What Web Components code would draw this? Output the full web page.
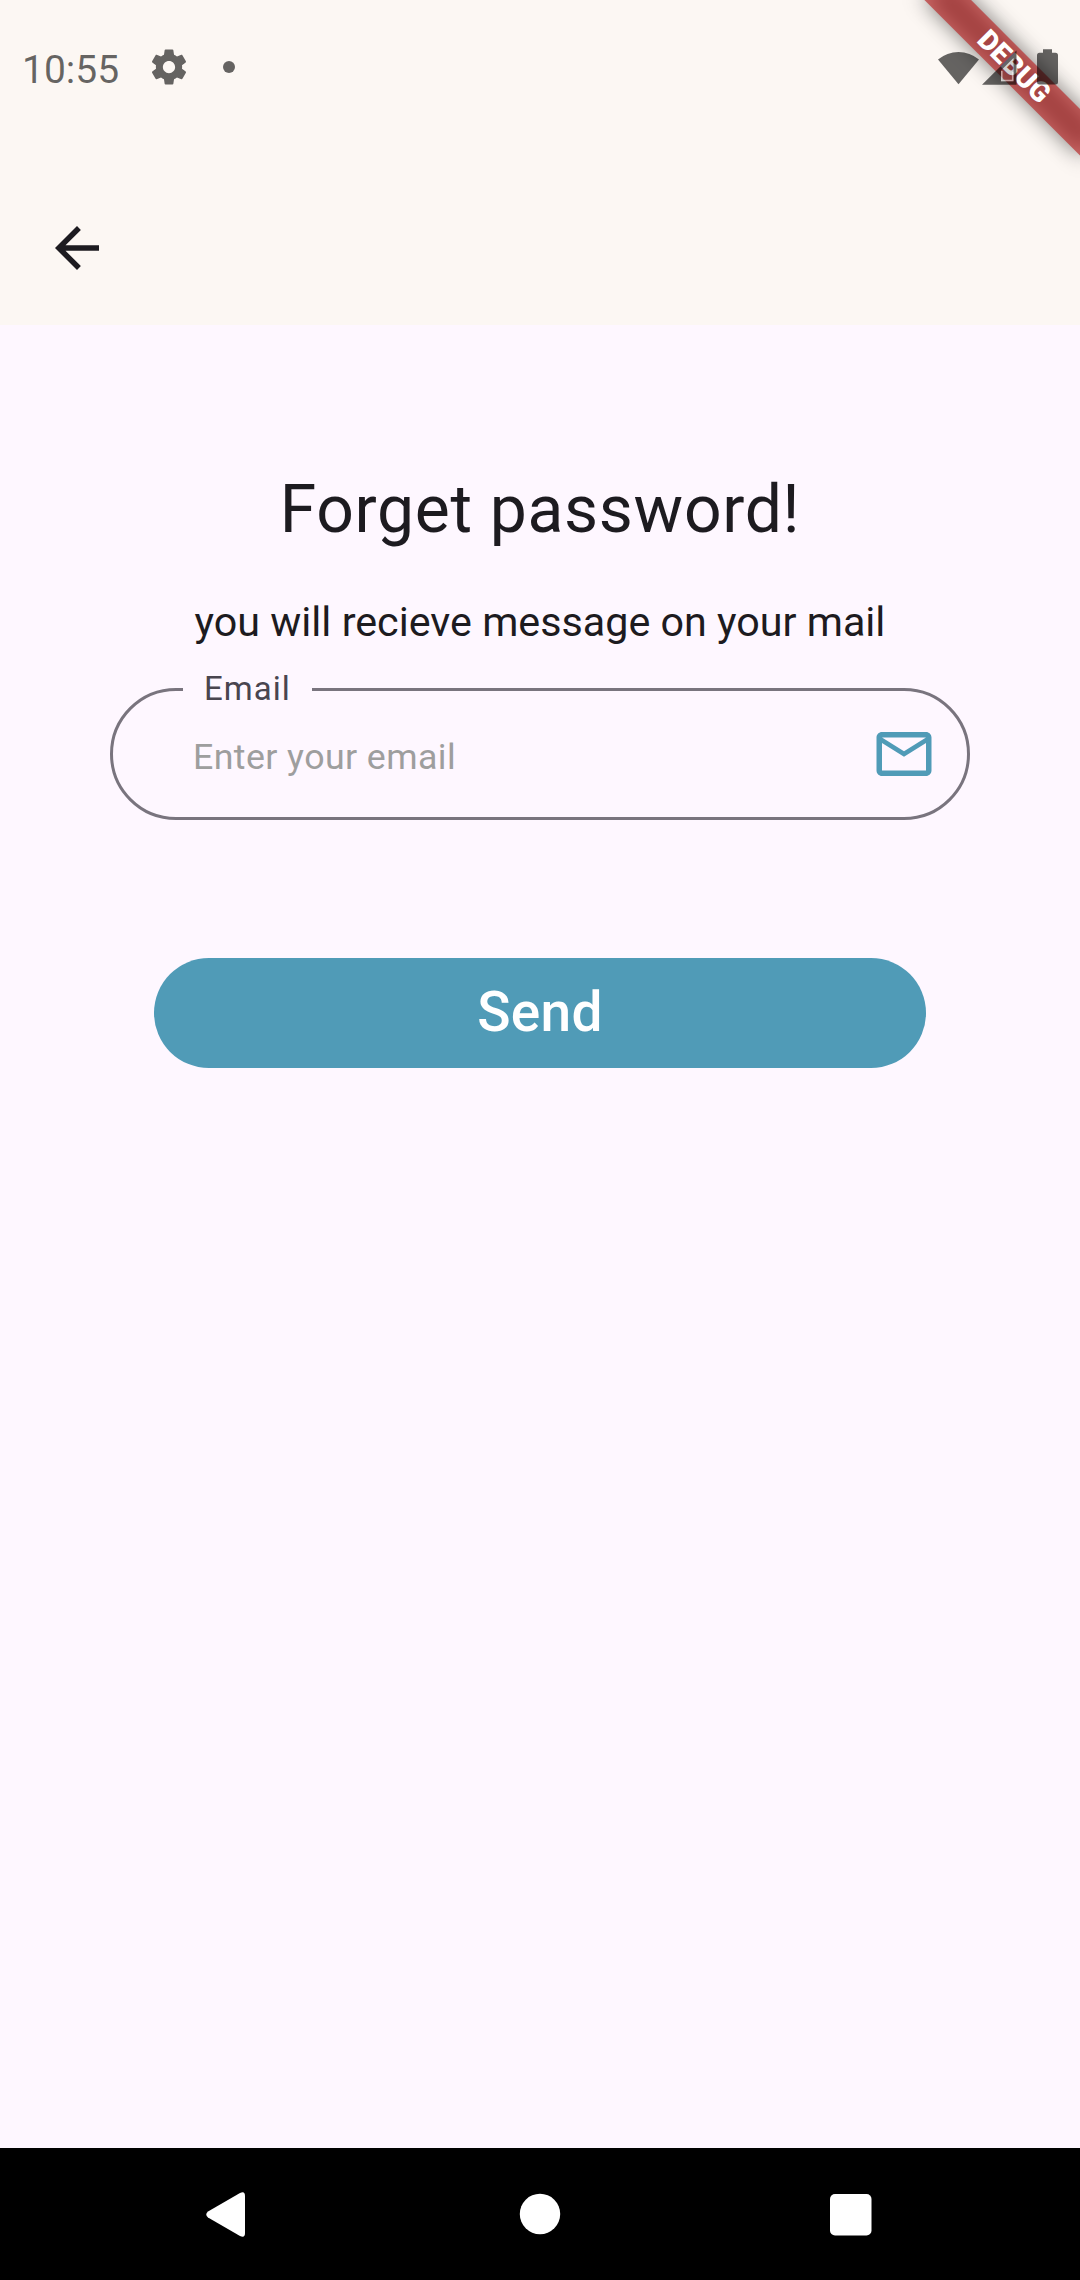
<!DOCTYPE html>
<html lang="en"><head><meta charset="utf-8"><title>Forget password</title>
<style>html,body{margin:0;padding:0}body{font-family:Roboto,"Liberation Sans",sans-serif;background:#fef7ff}</style></head>
<body><forget-screen></forget-screen>
<script>
const define=(name,html)=>customElements.define(name,class extends HTMLElement{
  constructor(){super();this.attachShadow({mode:'open'}).innerHTML=html;}
});

define('status-bar',`<style>
:host{display:flex;box-sizing:border-box;height:134px;padding:0 20px 0 22px;justify-content:space-between;align-items:center;color:rgba(0,0,0,.6);position:relative;z-index:2}
.l,.r{display:flex;align-items:center}
.time{font-size:39px;line-height:46px;width:97px;padding-top:6px;white-space:nowrap}
.gear{width:42px;height:42px;margin-left:29px}
.dot{width:12px;height:12px;border-radius:50%;background:currentColor;margin-left:33px}
svg{display:block;fill:currentColor}
</style>
<div class="l"><span class="time">10:55</span>
<svg class="gear" viewBox="0 0 24 24"><path d="M19.43 12.98c.04-.32.07-.64.07-.98s-.03-.66-.07-.98l2.11-1.65c.19-.15.24-.42.12-.64l-2-3.46c-.12-.22-.39-.3-.61-.22l-2.49 1c-.52-.4-1.08-.73-1.69-.98l-.38-2.65C14.46 2.18 14.25 2 14 2h-4c-.25 0-.46.18-.49.42l-.38 2.65c-.61.25-1.17.59-1.69.98l-2.49-1c-.23-.09-.49 0-.61.22l-2 3.46c-.13.22-.07.49.12.64l2.11 1.65c-.04.32-.07.65-.07.98s.03.66.07.98l-2.11 1.65c-.19.15-.24.42-.12.64l2 3.46c.12.22.39.3.61.22l2.49-1c.52.4 1.08.73 1.69.98l.38 2.65c.03.24.24.42.49.42h4c.25 0 .46-.18.49-.42l.38-2.65c.61-.25 1.17-.59 1.69-.98l2.49 1c.23.09.49 0 .61-.22l2-3.46c.12-.22.07-.49-.12-.64l-2.11-1.65zM12 15.5c-1.930 0-3.500-1.570-3.500-3.500s1.570-3.500 3.500-3.500 3.500 1.570 3.500 3.500-1.570 3.500-3.500 3.500z"/></svg>
<i class="dot"></i></div>
<div class="r">
<svg width="122" height="36" viewBox="938 49 122 36"><path d="M938 59.5A32 32 0 0 1 979 59.5L958.5 84.3Z"/><path fill-rule="evenodd" d="M982 84.700L1016.500 50.500V84.700ZM1001 70.500V81.300H1013.500V58Z"/><path d="M1001 70.500V81.300H1013.500V58Z" fill-opacity=".3"/><path d="M1001.800 71V80.500H1012.700V72" fill="none" stroke="#fff" stroke-opacity=".5" stroke-width="1.600"/><path d="M1043 49.3h9v3.4h3.5a2.5 2.5 0 0 1 2.5 2.5V82a2.5 2.5 0 0 1-2.5 2.5h-16A2.5 2.5 0 0 1 1037 82V55.2a2.5 2.5 0 0 1 2.500-2.500H1043Z"/></svg></div>`);

define('debug-banner',`<style>
:host{position:absolute;top:0;right:0;width:220px;height:220px;overflow:hidden;z-index:1}
.b{position:absolute;left:110px;top:77px;width:220px;height:33px;transform-origin:110px -77px;transform:rotate(45deg)}
.s,.t{position:absolute;inset:0}
.s{background:rgba(0,0,0,.5);filter:blur(10.9px)}
.t{background:rgba(183,28,28,.627);color:#fff;font-size:28.05px;font-weight:900;line-height:33px;text-align:center;text-indent:1px}
</style><div class="b"><div class="s"></div><div class="t">DEBUG</div></div>`);

define('top-bar',`<style>
:host{display:flex;align-items:center;height:154px;margin-top:37px;padding-left:44px}
svg{width:66px;height:66px;fill:#1d1b20}
</style><svg viewBox="0 0 24 24"><path d="M20 11H7.83l5.590-5.590L12 4l-8 8 8 8 1.410-1.410L7.830 13H20v-2z"/></svg>`);

define('outlined-field',`<style>
:host{display:block;width:860px}
fieldset{box-sizing:border-box;margin:0;width:860px;height:148px;border:3px solid #79747e;border-radius:66px;padding:0 30px 0 80px;min-width:0}
legend{margin-left:-10px;padding:0 21px 0 21px;font-size:33px;line-height:34px;letter-spacing:1px;color:#49454f;width:87px;white-space:nowrap}
.row{display:flex;align-items:center;justify-content:space-between;height:96px}
.hint{font-size:35.75px;line-height:50px;color:#9e9e9e;letter-spacing:.4px;padding-top:6px}
svg{width:66px;height:66px;fill:#509bb7}
</style><fieldset><legend><slot name="label"></slot></legend><div class="row"><span class="hint"><slot></slot></span>
<svg viewBox="0 0 24 24"><path d="M22 6c0-1.100-.9-2-2-2H4c-1.100 0-2 .9-2 2v12c0 1.100.9 2 2 2h16c1.100 0 2-.9 2-2V6zm-2 0l-8 5-8-5h16zm0 12H4V8l8 5 8-5v10z"/></svg></div></fieldset>`);

define('pill-button',`<style>
:host{display:flex;box-sizing:border-box;align-items:center;justify-content:center;width:772px;height:110px;padding-bottom:2px;border-radius:55px;background:#509bb7;color:#fff;font-size:55px;font-weight:500;line-height:64px;letter-spacing:.3px}
</style><slot></slot>`);

define('nav-bar',`<style>
:host{display:flex;height:132px;background:#000;align-items:center}
svg{display:block}
</style><svg width="1080" height="132" viewBox="0 2148 1080 132" fill="#fff"><path d="M208 2211.500L240 2193Q245 2190.500 245 2196V2233Q245 2238.500 240 2236L208 2217.500Q204.500 2214.500 208 2211.500Z"/><circle cx="540" cy="2214" r="20.200"/><rect x="830" y="2194" width="41.500" height="41.500" rx="5"/></svg>`);

define('forget-screen',`<style>
:host{display:flex;flex-direction:column;width:1080px;height:2280px;background:#fef7ff;position:relative;overflow:hidden}
header{background:#fcf7f3;height:325px;flex:none}
main{flex:1;display:flex;flex-direction:column;align-items:center;color:#1d1b20}
h1{margin:146px 0 0;font-size:66px;line-height:78px;font-weight:400;letter-spacing:.69px}
p{margin:48px 0 0;font-size:41.250px;line-height:50px}
outlined-field{margin-top:25px}
pill-button{margin-top:138px}
</style><header><status-bar></status-bar><top-bar></top-bar></header><debug-banner></debug-banner>
<main><h1>Forget password!</h1><p>you will recieve message on your mail</p>
<outlined-field><span slot="label">Email</span>Enter your email</outlined-field>
<pill-button>Send</pill-button></main><nav-bar></nav-bar>`);
</script></body></html>
